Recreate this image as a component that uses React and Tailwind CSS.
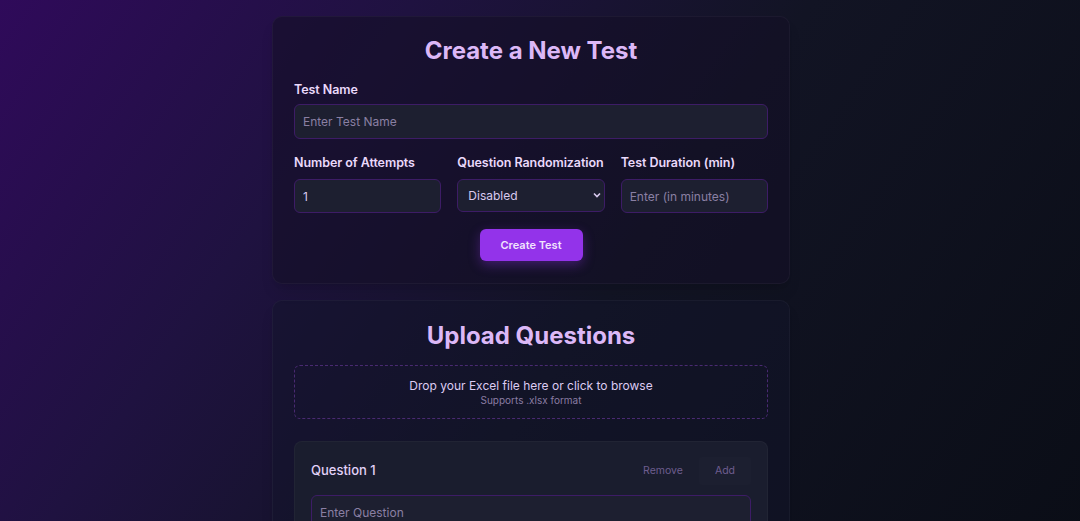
import React from 'react';

const inputCls =
  'w-full rounded-md border border-[#3d1c66] bg-[#1d1f30] px-2 text-[12px] text-[#d8c9ee] placeholder-[#8a7fa3] outline-none';

function Label({ children, className = '' }) {
  return (
    <label
      className={
        'block whitespace-nowrap text-[12.5px] font-semibold leading-[16px] tracking-[-0.005em] text-[#ead9fb] ' + className
      }
    >
      {children}
    </label>
  );
}

export default function App() {
  return (
    <div
      className="min-h-screen w-full bg-[linear-gradient(125deg,#2f0a5a_0%,#1f1240_28%,#121424_55%,#0a0d16_100%)] pr-[18px]"
      style={{ fontFamily: 'Inter, "Noto Sans", sans-serif' }}
    >
      <div className="mx-auto flex w-[518px] flex-col gap-[16px] pt-[16px]">
        {/* Create test */}
        <section className="rounded-[10px] border border-white/[0.04] bg-[#140f26]/60 px-[21px] pb-[22px] pt-[20px] shadow-lg">
          <h1 className="text-center text-[24px] font-bold leading-[28px] text-[#dcb8f7]">Create a New Test</h1>

          <div className="mt-[17px]">
            <Label className="mb-[6px]">Test Name</Label>
            <input className={inputCls + ' h-[35px]'} placeholder="Enter Test Name" />
          </div>

          <div className="mt-[16px] grid grid-cols-3 gap-[16px]">
            <div>
              <Label className="mb-[8px]">Number of Attempts</Label>
              <input className={inputCls + ' h-[34px]'} defaultValue="1" />
            </div>
            <div>
              <Label className="mb-[8px]">Question Randomization</Label>
              <div className="relative">
                <select className="h-[33px] w-full appearance-none rounded-md border border-[#3d1c66] bg-[#1d1f30] px-[10px] text-[12px] text-[#d8c9ee] outline-none">
                  <option>Disabled</option>
                  <option>Enabled</option>
                </select>
                <svg
                  className="pointer-events-none absolute right-[4px] top-[13px]"
                  width="8"
                  height="6"
                  viewBox="0 0 8 6"
                  fill="none"
                  stroke="#d8c9ee"
                  strokeWidth="1.6"
                >
                  <path d="M1 1.5l3 3 3-3" />
                </svg>
              </div>
            </div>
            <div>
              <Label className="mb-[8px]">Test Duration (min)</Label>
              <input className={inputCls + ' h-[34px]'} placeholder="Enter (in minutes)" />
            </div>
          </div>

          <div className="mt-[16px] flex justify-center">
            <button
              type="button"
              className="h-[32px] w-[103px] rounded-md bg-[#9333ea] text-[11px] font-semibold text-[#f1e4fd] shadow-[0_4px_12px_rgba(147,51,234,0.35)]"
            >
              Create Test
            </button>
          </div>
        </section>

        {/* Upload */}
        <section className="rounded-[10px] border border-white/[0.04] bg-[#12142a]/50 px-[21px] pb-[21px] pt-[20px] shadow-lg">
          <h2 className="text-center text-[24px] font-bold leading-[30px] text-[#dcb8f7]">Upload Questions</h2>

          <div className="mt-[14px] flex h-[54px] flex-col items-center justify-center rounded-md border border-dashed border-[#4a2a72]">
            <p className="text-[12px] leading-[15px] text-[#dccbf2]">Drop your Excel file here or click to browse</p>
            <p className="text-[10px] leading-[14px] text-[#8a7ca3]">Supports .xlsx format</p>
          </div>

          <div className="mt-[22px] rounded-[8px] border border-white/[0.03] bg-[#1a1d2e] px-[16px] pt-[15px]">
            <div className="flex items-center justify-between">
              <span className="text-[13px] font-medium text-[#e2d2f8]">Question 1</span>
              <div className="flex items-center text-[10.5px] text-[#6e5d8f]">
                <button type="button" className="rounded px-[16px] py-[6px]">Remove</button>
                <button type="button" className="rounded bg-white/[0.008] px-[16px] py-[6px]">Add</button>
              </div>
            </div>
            <div className="mt-[10px] pb-[16px]">
              <input className={inputCls + ' h-[36px]'} placeholder="Enter Question" />
            </div>
          </div>
        </section>
      </div>
    </div>
  );
}
